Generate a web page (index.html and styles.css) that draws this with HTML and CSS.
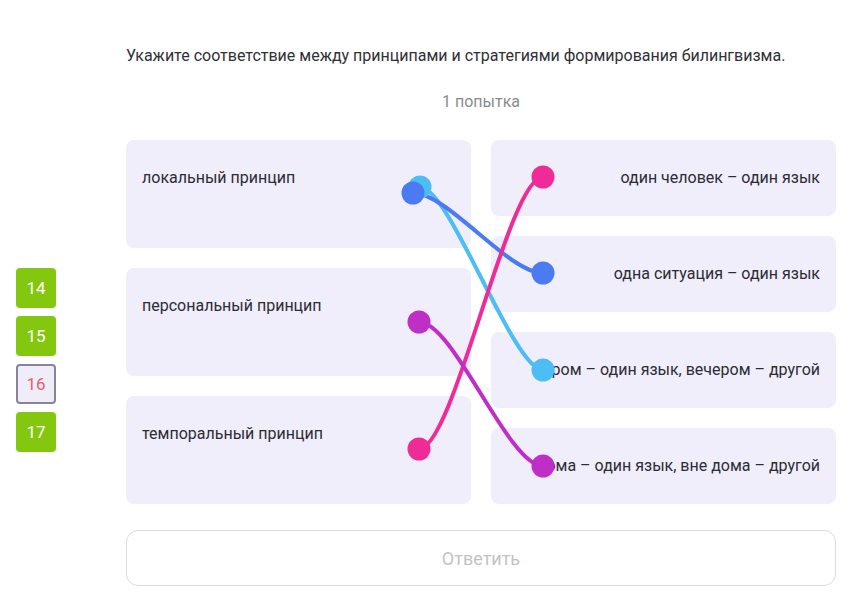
FILE: index.html
```html
<!DOCTYPE html>
<html lang="ru">
<head>
  <meta charset="UTF-8">
  <meta name="viewport" content="width=device-width, initial-scale=1.0">
  <title>Соответствие</title>
  <link rel="stylesheet" href="styles.css">
</head>
<body>
  <div class="page">
    <!-- номера вопросов -->
    <nav class="steps">
      <div class="step done">14</div>
      <div class="step done">15</div>
      <div class="step current">16</div>
      <div class="step done">17</div>
    </nav>

    <main class="task">
      <p class="question">Укажите соответствие между принципами и стратегиями формирования билингвизма.</p>
      <p class="tries">1 попытка</p>

      <div class="match">
        <div class="col left">
          <div class="card">локальный принцип</div>
          <div class="card">персональный принцип</div>
          <div class="card">темпоральный принцип</div>
        </div>
        <div class="col right">
          <div class="card">один человек – один язык</div>
          <div class="card">одна ситуация – один язык</div>
          <div class="card">утром – один язык, вечером – другой</div>
          <div class="card">дома – один язык, вне дома – другой</div>
        </div>

        <!-- связи между карточками -->
        <svg class="links" width="710" height="364" viewBox="0 0 710 364">
          <g fill="none" stroke-width="4" stroke-linecap="round">
            <path d="M294 47 C324 47 387 230 417 230" stroke="#4dbdf5"/>
            <path d="M287 53 C322 53 382 133 417 133" stroke="#4a7bf0"/>
            <path d="M293 309 C328 309 382 37 417 37" stroke="#ee2b97"/>
            <path d="M293 182 C328 182 382 326 417 326" stroke="#bf2fc8"/>
          </g>
          <circle cx="294" cy="47" r="11.5" fill="#4dbdf5"/>
          <circle cx="287" cy="53" r="11.5" fill="#4a7bf0"/>
          <circle cx="293" cy="182" r="11.5" fill="#bf2fc8"/>
          <circle cx="293" cy="309" r="11.5" fill="#ee2b97"/>
          <circle cx="417" cy="37" r="11.5" fill="#ee2b97"/>
          <circle cx="417" cy="133" r="11.5" fill="#4a7bf0"/>
          <circle cx="417" cy="230" r="11.5" fill="#4dbdf5"/>
          <circle cx="417" cy="326" r="11.5" fill="#bf2fc8"/>
        </svg>
      </div>

      <button class="answer">Ответить</button>
    </main>
  </div>
</body>
</html>
```

FILE: styles.css
```css
body { margin: 0; font-family: Roboto, "Liberation Sans", Arial, sans-serif; color: #2c2c34; background: #fff; }
.page { display: flex; }

.steps { display: flex; flex-direction: column; gap: 8px; padding: 268px 0 0 16px; width: 40px; }
.step { width: 40px; height: 40px; box-sizing: border-box; border-radius: 4px; display: flex; align-items: center; justify-content: center; font-size: 17px; }
.step.done { background: #84c70f; color: #fff; }
.step.current { background: #efedf8; border: 2px solid #8b8398; color: #e0616f; }

.task { margin-left: 70px; width: 710px; padding-top: 44px; }
.question { margin: 0; font-size: 16px; line-height: 24px; color: #303036; }
.tries { margin: 22px 0 0; text-align: center; font-size: 16px; line-height: 24px; color: #8b8b8f; }

.match { position: relative; display: grid; grid-template-columns: 345px 345px; column-gap: 20px; margin-top: 26px; }
.col { display: flex; flex-direction: column; gap: 20px; }
.card { background: #f0eefa; border-radius: 8px; font-size: 16px; line-height: 24px; box-sizing: border-box; }
.left .card { height: 108px; padding: 26px 16px; }
.right .card { height: 76px; padding: 0 16px; display: flex; align-items: center; justify-content: flex-end; white-space: nowrap; overflow: hidden; }
.links { position: absolute; left: 0; top: 0; pointer-events: none; }

.answer { display: block; width: 100%; height: 56px; margin-top: 26px; background: #fff; border: 1px solid #dcdbe0; border-radius: 12px; font-family: inherit; font-size: 18px; color: #c2c2c6; }
```
